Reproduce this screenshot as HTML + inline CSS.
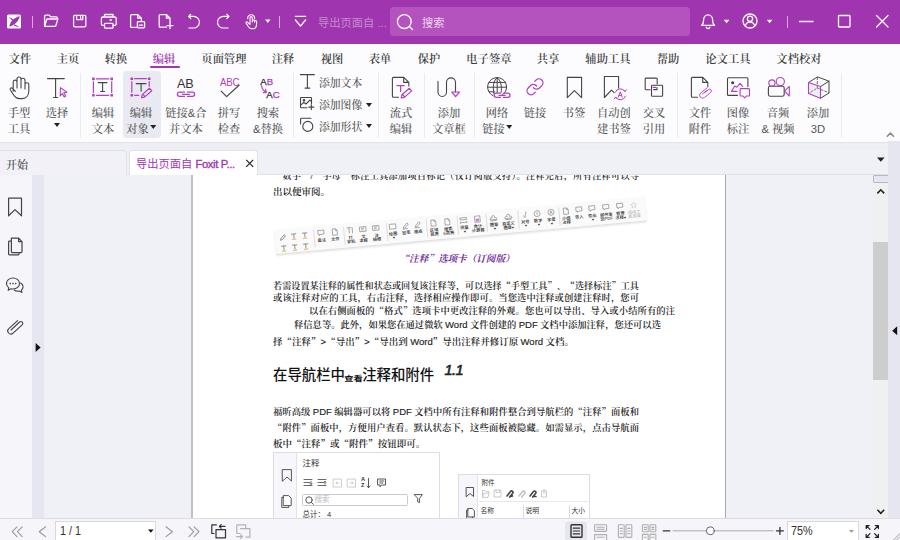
<!DOCTYPE html>
<html lang="zh-CN">
<head>
<meta charset="utf-8">
<title>Foxit PDF Editor</title>
<style>
*{box-sizing:border-box;margin:0;padding:0}
html,body{width:900px;height:540px;overflow:hidden;background:#f0f1f6}
body{position:relative;font-family:"Liberation Sans","Noto Sans CJK SC",sans-serif;color:#444}
.abs{position:absolute}
svg{position:absolute;overflow:visible}
/* title bar */
#title{position:absolute;left:0;top:0;width:900px;height:44px;background:#a035b0}
#title svg{fill:none;stroke:#fff;stroke-width:1.3;stroke-linecap:round;stroke-linejoin:round}
#search{position:absolute;left:390px;top:7px;width:300px;height:29px;border-radius:3.500px;background:#b453bd}
.tsep{position:absolute;top:16px;width:1px;height:12px;background:#d9a6df}
#doctitle{position:absolute;left:318px;top:14.600px;font-size:11.250px;line-height:17px;color:#c08fca;white-space:nowrap}
#stext{position:absolute;left:422px;top:15px;font-size:11.250px;line-height:17px;color:#ecd3ef;white-space:nowrap}
/* menu */
#menu{position:absolute;left:0;top:44px;width:900px;height:26px;background:#fcfcfe}
.mi{position:absolute;top:6.5px;height:16px;line-height:16px;font-size:11.25px;font-family:"Liberation Sans","Noto Serif CJK SC",serif;font-weight:600;color:#3d3d3d;white-space:nowrap;transform:translateX(-50%);letter-spacing:0.1px}
.mi.act{color:#a035b0}
#uline{position:absolute;left:149.500px;top:21.700px;width:30px;height:2.300px;border-radius:1.200px;background:#a035b0}
/* ribbon */
#ribbon{position:absolute;left:0;top:70px;width:900px;height:71px;background:#fcfcfe}
.rsep{position:absolute;top:3px;width:1px;height:65px;background:#eaeaf1}
.rb{position:absolute;top:0;width:0;height:70px}
.rb .l1,.rb .l2{position:absolute;left:0;transform:translateX(-50%);white-space:nowrap;font-family:"Liberation Sans","Noto Serif CJK SC",serif;font-size:11.25px;line-height:16px;color:#555;font-weight:500}
.rb .l1{top:35px}
.rb .l2{top:51.3px}
.rb svg{left:-12px;top:6px;width:24px;height:24px;fill:none;stroke:#444;stroke-width:1.1;stroke-linecap:round;stroke-linejoin:round}
.pu{stroke:#b040c0 !important}
.dd{display:inline-block;width:0;height:0;border-left:3px solid transparent;border-right:3px solid transparent;border-top:4px solid #222;vertical-align:middle;margin-left:1px;position:relative;top:-3px}
#hl{position:absolute;left:122.500px;top:0.500px;width:38px;height:67.300px;border-radius:4px;background:#e9e9f2}
.sm{position:absolute;left:319px;white-space:nowrap;font-family:"Liberation Sans","Noto Serif CJK SC",serif;font-size:10.800px;line-height:16px;color:#555;font-weight:500}
#ribbon>svg{fill:none;stroke:#444;stroke-width:1.1;stroke-linecap:round;stroke-linejoin:round}
.ict{position:absolute;font-family:"Liberation Sans",sans-serif;line-height:1.15;white-space:nowrap}
/* tab bar */
#gap{position:absolute;left:0;top:141px;width:900px;height:10px;background:linear-gradient(to bottom,#fcfcfe 0,#fcfcfe 0.700px,#e3e3ed 0.700px,#e3e3ed 2px,#eeeef5 2px)}
#tabs{position:absolute;left:0;top:148px;width:900px;height:27px;border-bottom:1px solid #e0e0ea}
#tab1{position:absolute;left:0;top:2px;width:127px;height:25px;border:1px solid #e0e0e8;border-bottom:none;border-left:none;border-radius:0 4px 0 0;background:#f1f1f7}
#tab1 span{position:absolute;left:6px;top:6.300px;font-size:11px;line-height:16px;color:#444;font-family:"Liberation Sans","Noto Serif CJK SC",serif;font-weight:500}
#tab2{position:absolute;left:129px;top:2px;width:129px;height:26px;border:1px solid #e0e0e8;border-bottom:none;border-radius:4px 4px 0 0;background:#fff}
#tab2 span b{font-weight:400;-webkit-text-stroke:0.350px #a035b0;letter-spacing:-0.350px}
#tab2 span{position:absolute;left:6px;top:5.300px;font-size:11.250px;font-weight:400;line-height:17px;color:#a035b0;white-space:nowrap}
/* left nav */
#nav{position:absolute;left:0;top:175px;width:32px;height:343px;background:#f5f5fa;z-index:2}
#nav svg{fill:none;stroke:#444;stroke-width:1.2;stroke-linecap:round;stroke-linejoin:round}
#strip{position:absolute;left:32px;top:175px;width:12px;height:343px;background:#e6e6f1}
#panel{position:absolute;left:44px;top:175px;width:148px;height:343px;background:#f0f1f6}
#pageedge{position:absolute;left:191px;top:175px;width:2px;height:343px;background:#c2c1c0}
#page{position:absolute;left:193px;top:175px;width:532px;height:343px;background:#fff;overflow:hidden;font-family:"Liberation Sans","Noto Serif CJK SC",serif;color:#222}
#pageedge2{position:absolute;left:725px;top:175px;width:1px;height:343px;background:#a8a8a8}
#vs{position:absolute;left:873px;top:175px;width:15px;height:343px;background:#f0f0f0}
#thumb{position:absolute;left:873px;top:242px;width:15px;height:138px;background:#cdcdcd}
#rstrip{position:absolute;left:888px;top:141px;width:12px;height:377px;background:#e6e6f1}
/* status */
#status{position:absolute;left:0;top:518px;width:900px;height:22px;background:#f5f5fa;border-top:1px solid #dcdce4}
#status svg{fill:none;stroke:#888;stroke-width:1.1;stroke-linecap:round;stroke-linejoin:round}
.ln{position:absolute;white-space:nowrap;font-size:9.5px;line-height:13px;color:#222;font-weight:600}
.ln b{font-family:"Liberation Sans","Noto Sans CJK SC",sans-serif;font-weight:400;font-size:9.500px;-webkit-text-stroke:0.150px #222}

q{quotes:none;font-family:"Noto Serif CJK SC","Liberation Serif",serif}
q:before,q:after{content:none}
#pc{position:absolute;left:-193px;top:-175px;width:900px;height:540px}
.ln{font-family:"Liberation Serif","Noto Serif CJK SC",serif}
.ln.j{text-align:justify;text-align-last:justify;font-size:9.300px}
#cap{position:absolute;left:399.500px;top:251.300px;white-space:nowrap;font-family:"Liberation Serif","Noto Serif CJK SC",serif;font-weight:700;font-style:italic;font-size:9.600px;line-height:14px;color:#7030a0}
#h1{position:absolute;left:273px;top:364.500px;white-space:nowrap;font-family:"Liberation Sans","Noto Sans CJK SC",sans-serif;font-weight:500;font-size:14.400px;line-height:21px;color:#111}
#h1 small{font-size:8.600px;font-weight:700;display:inline-block;transform:scale(1.080,0.850);transform-origin:50% 80%}
#h1n{position:absolute;left:444.500px;top:360.500px;font-family:"Liberation Sans",sans-serif;font-weight:400;-webkit-text-stroke:0.600px #222;font-style:italic;font-size:14.500px;letter-spacing:-0.500px;line-height:18px;color:#222}
#tstrip{position:absolute;left:273.500px;top:230px;width:371.500px;height:25px;background:#fafafa;border-bottom:1px solid #e0e0e0;box-shadow:0 1px 2px rgba(0,0,0,0.100);transform-origin:0 0;transform:rotate(-5.150deg)}
#tstrip .sp{position:absolute;top:3px;width:0.700px;height:18px;background:#ddd}
#tstrip .si{position:absolute;top:4px;width:0;height:20px}
#tstrip .si svg{left:-3.500px;top:0;width:7px;height:7px;fill:none;stroke:#8a8a8a;stroke-width:0.700}
#tstrip .si span{position:absolute;left:0;transform:translateX(-50%);white-space:nowrap;font-family:"Liberation Sans","Noto Sans CJK SC",sans-serif;font-size:4.200px;line-height:4.400px;color:#222;font-weight:500}
#tstrip .si span:nth-of-type(1){top:8.500px}
#tstrip .si span:nth-of-type(2){top:13.100px}
#tstrip .g1{width:6.500px;height:6.500px;fill:none;stroke:#888;stroke-width:0.700}
#p1{position:absolute;left:273px;top:452px;width:167px;height:70px;background:#fff;border:1px solid #dcdcea}
#p2{position:absolute;left:458px;top:474px;width:132px;height:50px;background:#fff;border:1px solid #dcdcea}
#p1 svg,#p2 svg{fill:none;stroke:#444;stroke-width:0.900;stroke-linejoin:round;stroke-linecap:round}
.pl{position:absolute;left:0;top:0;width:23px;height:100%;background:#f6f6fb;border-right:1px solid #e2e2ee}
.pt{position:absolute;white-space:nowrap;font-family:"Liberation Sans","Noto Sans CJK SC",sans-serif;color:#333;line-height:1.200}
.sb{position:absolute;left:28px;top:40.500px;width:106px;height:12px;border:1px solid #c9c9d6;border-radius:1.500px;background:#fff}
.hr{position:absolute;left:20px;top:25.800px;width:110px;height:1px;background:#e8e8f0}
.vr{position:absolute;top:30px;width:1px;height:20px;background:#dcdce6}

#pgbox{position:absolute;left:55px;top:2px;width:101px;height:22px;background:#fff;border:1px solid #d8d8e4}
#pgbox span{position:absolute;left:3.500px;top:2px;font-size:12px;transform:scaleX(0.900);transform-origin:0 50%;line-height:14px;color:#333;font-family:"Liberation Sans",sans-serif;white-space:nowrap}
#zbox{position:absolute;left:787px;top:2px;width:72px;height:22px;background:#fff;border:1px solid #d8d8e4}
#zbox span{position:absolute;left:3px;top:2px;font-size:12px;transform:scaleX(0.900);transform-origin:0 50%;line-height:14px;color:#333;font-family:"Liberation Sans",sans-serif;white-space:nowrap}
</style>
</head>
<body>

<!-- ================= TITLE BAR ================= -->
<div id="title">
  <div class="tsep" style="left:32px"></div>
  <div class="tsep" style="left:279px"></div>
  <div class="tsep" style="left:787px"></div>
  <div id="doctitle">导出页面自 ...</div>
  <div id="search"></div>
  <div id="stext">搜索</div>
  <svg style="left:0;top:0" width="900" height="44" viewBox="0 0 900 44">
    <!-- logo -->
    <rect x="7" y="14.5" width="14" height="14" rx="1.5" fill="#fff" stroke="none"/>
    <path d="M9.3 26.8 C9.8 21.5 14 17.5 19.8 16.2 C18.8 20.8 15 25 9.3 26.8 Z" fill="#a035b0" stroke="none"/>
    <path d="M8.6 17.2 C10.5 17.4 12.2 18.2 13.4 19.4 L12.2 20.6 C11.3 19.2 10.1 18.1 8.6 17.2 Z M14.6 24.6 C16 25 17.6 25.8 19.6 27.2 C17.6 26.9 15.6 26.4 13.6 25.6 Z" fill="#a035b0" stroke="none"/>
    <!-- open folder -->
    <path d="M44.6 26.4 V16.2 a1 1 0 0 1 1-1 h3.6 l1.5 1.6 h5.6 a1 1 0 0 1 1 1 V19 M44.6 26.4 l2.3-7.4 h11 l-2.3 7.4 z"/>
    <!-- save -->
    <rect x="73.6" y="15.4" width="12.2" height="11.4" rx="1"/>
    <path d="M76.6 15.6 v4 h6.2 v-4 M80.6 16.6 v1.8"/>
    <!-- print -->
    <path d="M104.5 17 v-2.5 h8.5 v2.5 M104.5 25.3 h-1.7 a1.4 1.4 0 0 1 -1.4-1.4 v-5.5 a1.4 1.4 0 0 1 1.4-1.4 h12 a1.4 1.4 0 0 1 1.4 1.4 v5.5 a1.4 1.4 0 0 1 -1.4 1.4 h-1.7"/>
    <rect x="104.5" y="23.3" width="8.5" height="4.8" rx="0.6"/>
    <path d="M110 20 h1.4"/>
    <!-- create pdf -->
    <path d="M136.5 27.4 h-5 a0.9 0.9 0 0 1 -0.9-0.9 v-11 a0.9 0.9 0 0 1 0.9-0.9 h6.4 l3.5 3.6 v2.6 M137.7 14.8 v3.4 h3.5"/>
    <rect x="137.4" y="21.6" width="7.2" height="6.2" rx="0.8"/>
    <path d="M139.4 25.2 h3.2"/>
    <!-- new doc -->
    <path d="M166.5 27.2 h-6.4 a0.9 0.9 0 0 1 -0.9-0.9 v-10.8 a0.9 0.9 0 0 1 0.9-0.9 h6.5 l3.4 3.6 v4 M166.4 14.8 v3.4 h3.5 M170 22.6 v6 M167 25.6 h6"/>
    <!-- undo -->
    <path d="M190.700 14.300 l-2.200 2.100 l2.200 2.100 M188.700 16.400 h4.900 a5.800 5.800 0 0 1 0 11.600 h-4.800" stroke-width="1.200"/>
    <!-- redo -->
    <path d="M226.800 14.300 l2.200 2.100 l-2.200 2.100 M228.800 16.400 h-5.500 a5.800 5.800 0 0 0 0 11.600 h4.800" stroke-width="1.200"/>
    <!-- hand pointer -->
    <g stroke-width="1.100"><path d="M250 24.400 v-6.600 a1.150 1.150 0 0 1 2.300 0 v4.200 m0 -1.300 a1.150 1.150 0 0 1 2.200 0.200 v1.300 m0 -0.900 a1.100 1.100 0 0 1 2.100 0.300 v1.700 c0 3.300 -1 5.500 -3.300 5.500 h-1.700 c-1.500 0 -2.300 -0.700 -3.300 -2.300 l-2.200 -3.400 c-0.500 -0.900 0.600 -1.700 1.400 -0.900 l1.400 1.500"/>
    <path d="M247.700 18.800 a3.500 3.500 0 1 1 6.900 0"/></g>
    <path d="M265 19.6 h5.6 l-2.8 3.4 z" fill="#fff" stroke="none"/>
    <!-- customize -->
    <path d="M295.4 16.4 h10.2 M295.4 20 l5.1 6 l5.1 -6"/>
    <!-- search magnifier -->
    <circle cx="404.300" cy="21.600" r="6.900"/>
    <path d="M409.300 26.500 l3.300 3"/>
    <!-- bell -->
    <path d="M701.6 25.4 h13 c-1.6-1.3 -2-2.6 -2-5.4 c0-2.8 -1.8-5.2 -4.5-5.2 c-2.700 0 -4.500 2.400 -4.500 5.200 c0 2.800 -0.400 4.100 -2 5.400 z M706.300 27.200 a1.900 1.900 0 0 0 3.600 0"/>
    <path d="M723.800 19.800 h5.600 l-2.800 3.400 z" fill="#fff" stroke="none"/>
    <!-- user -->
    <circle cx="750" cy="21" r="7"/>
    <circle cx="750" cy="18.800" r="2.600"/>
    <path d="M745.300 26 c0.600-2.600 2.400-3.800 4.700-3.800 c2.300 0 4.100 1.200 4.700 3.800"/>
    <path d="M766.800 19.800 h5.600 l-2.800 3.400 z" fill="#fff" stroke="none"/>
    <!-- window buttons -->
    <path d="M799.500 21.500 h13.500"/>
    <rect x="838.500" y="15.500" width="11.500" height="11.500" rx="0.800"/>
    <path d="M876.500 15.500 l11.500 11.500 M888 15.500 l-11.500 11.500"/>
  </svg>
</div>

<!-- ================= MENU ================= -->
<div id="menu">
  <div class="mi" style="left:20px">文件</div>
  <div class="mi" style="left:68px">主页</div>
  <div class="mi" style="left:116px">转换</div>
  <div class="mi act" style="left:164px">编辑</div>
  <div class="mi" style="left:224px">页面管理</div>
  <div class="mi" style="left:283px">注释</div>
  <div class="mi" style="left:332px">视图</div>
  <div class="mi" style="left:380px">表单</div>
  <div class="mi" style="left:429px">保护</div>
  <div class="mi" style="left:489px">电子签章</div>
  <div class="mi" style="left:548px">共享</div>
  <div class="mi" style="left:608px">辅助工具</div>
  <div class="mi" style="left:668px">帮助</div>
  <div class="mi" style="left:728px">论文工具</div>
  <div class="mi" style="left:799px">文档校对</div>
  <div id="uline"></div>
</div>

<!-- ================= RIBBON ================= -->
<div id="ribbon">
  <div id="hl"></div>
  <div class="rsep" style="left:80px"></div>
  <div class="rsep" style="left:292.500px"></div>
  <div class="rsep" style="left:377.500px"></div>
  <div class="rsep" style="left:424px"></div>
  <div class="rsep" style="left:474px"></div>
  <div class="rsep" style="left:677px"></div>
  <div class="rsep" style="left:841px"></div>


  <svg id="ricons" style="left:0;top:-70px" width="900" height="141" viewBox="0 0 900 141">
    <!-- hand tool -->
    <path d="M13.200 91.200 V82 a1.900 1.900 0 0 1 3.800 0 V88 M17 88 V79 a2 2 0 0 1 4 0 V88 M21 88 V80.200 a2 2 0 0 1 4 0 V88.500 M25 89 V84.600 a1.900 1.900 0 0 1 3.800 0 V91 c0 4.500 -2.600 7.600 -6.400 7.600 h-3 c-2.600 0 -4.200 -1.200 -5.600 -3.400 l-3.400 -5.200 c-0.900 -1.500 0.700 -2.900 2.100 -1.600 l2.900 3"/>
    <!-- select T -->
    <path d="M47.500 78.600 h16.800 M55.600 78.600 v18.900 M53.500 97.500 h4.200"/>
    <path class="pu" d="M60.400 87.600 l6.600 4.600 l-3.200 0.700 l1.900 3.200 l-1.500 0.900 l-1.900 -3.300 l-2.100 2.300 z"/>
    <!-- edit text -->
    <g class="pu" stroke-width="1.200">
      <path d="M96.300 78.900 h12.500 M96.300 95.300 h12.500 M93.400 81.800 v10.600 M111.700 81.800 v10.600"/>
      <g fill="#b040c0" stroke="none"><rect x="92.100" y="77.600" width="2.600" height="2.600" rx="0.500"/><rect x="110.400" y="77.600" width="2.600" height="2.600" rx="0.500"/><rect x="92.100" y="94" width="2.600" height="2.600" rx="0.500"/><rect x="110.400" y="94" width="2.600" height="2.600" rx="0.500"/></g>
    </g>
    <path d="M98.200 82.600 h8.800 M102.600 82.600 v8.900 M100.600 91.500 h4"/>
    <!-- edit object -->
    <g class="pu" stroke-width="1.200">
      <path d="M134.600 78.700 h11.800 M131.800 81.600 v10.600 M149.200 81.600 v4.600 M134.600 95.300 h4.200"/>
      <g fill="#b040c0" stroke="none"><rect x="130.500" y="77.400" width="2.600" height="2.600" rx="0.500"/><rect x="147.900" y="77.400" width="2.600" height="2.600" rx="0.500"/><rect x="130.500" y="94" width="2.600" height="2.600" rx="0.500"/></g>
      <path d="M141.600 97.600 l0.600 -3 l7.200 -6.400 l2.300 2.500 l-7.200 6.400 z M142.800 94.200 l2.200 2.400"/>
    </g>
    <path d="M136.200 83.600 h9.800 M141.100 83.600 v7.600"/>
    <!-- link & merge -->
    <g class="pu" stroke-width="1.300">
      <path d="M184.500 92.200 h-5 a2.100 2.100 0 0 0 0 4.200 h5 M187.500 92.200 h5 a2.100 2.100 0 0 1 0 4.200 h-5 M182.500 94.300 h7"/>
    </g>
    <!-- spell check -->
    <path d="M221.200 91.200 l5.400 5.400 l12.400 -11.400" stroke-width="1.200"/>
    <!-- search & replace arrow -->
    <path class="pu" d="M261.600 85.800 c0.300 3 1.600 5 4.600 6.400 M263.400 92.600 l3 -0.300 l-0.800 -2.900" stroke-width="1.200"/>
    <!-- add text T -->
    <path d="M300.400 74.600 h14 M307.400 74.600 v13.500 M305 88.100 h4.800"/>
    <!-- add image -->
    <path d="M311.500 103.500 v-5.200 a0.800 0.800 0 0 0 -0.800-0.800 h-9.400 a0.800 0.800 0 0 0 -0.800 0.800 v8.600 a0.800 0.800 0 0 0 0.800 0.800 h5.700 M300.700 105.200 l3-2.800 l2.200 1.600 l4-3.800 l1.600 1.400 M311.300 104.600 v5 M308.800 107.100 h5"/>
    <circle cx="304" cy="100.300" r="0.800" fill="#444"/>
    <!-- add shape -->
    <path d="M300.600 124 v-5 a0.800 0.800 0 0 1 0.800-0.800 h9.600"/>
    <circle cx="307.800" cy="126.400" r="5"/>
    <!-- flow edit -->
    <path d="M398.500 97.200 h-5.100 a1 1 0 0 1 -1-1 v-17.800 a1 1 0 0 1 1-1 h10.400 l5 5 v3.600 M403.700 77.600 v4.800 h4.900"/>
    <g class="pu" stroke-width="1.200"><path d="M397 85.600 h7.200 M400.600 85.600 v5.800 M401.200 98 l0.700 -3.200 l7.400 -6.500 l2.400 2.600 l-7.400 6.500 z M402.600 94.600 l2.200 2.400"/></g>
    <!-- article box -->
    <path d="M438 81.400 v10.800 a4.250 4.250 0 0 0 8.500 0 v-9.800 a4.500 4.500 0 0 1 9 0 v9.600"/>
    <path class="pu" d="M451.800 92 h7.600 l-3.800 4.600 z" stroke-width="1.200"/>
    <!-- web link globe -->
    <path d="M501.400 95.600 a9.500 9.500 0 1 0 -8.600 0 M497.200 77.700 v15 M487.800 87.200 h18.800 M489.200 82.400 h16 M489.200 91.800 h5.500 M497.200 77.700 c-3.800 2.600 -4.800 9.400 -3.200 16 M497.200 77.700 c3.800 2.600 4.800 9.400 4 14.400" stroke-width="1"/>
    <g class="pu" stroke-width="1.300">
      <path d="M500.700 93.200 h-4.400 a2.100 2.100 0 0 0 0 4.200 h4.400 M503.500 93.200 h4.400 a2.100 2.100 0 0 1 0 4.200 h-4.400 M499 95.300 h6.200"/>
    </g>
    <!-- link -->
    <g class="pu" stroke-width="1.600" transform="translate(525.400 77.200) scale(0.800)">
      <path d="M10 13a5 5 0 0 0 7.540.540l3-3a5 5 0 0 0-7.070-7.070l-1.720 1.710"/>
      <path d="M14 11a5 5 0 0 0-7.540-.540l-3 3a5 5 0 0 0 7.070 7.070l1.710-1.710"/>
    </g>
    <!-- bookmark -->
    <path d="M567.300 77.400 h14.300 v20.200 l-7.200 -7 l-7.100 7 z"/>
    <!-- auto bookmark -->
    <path d="M618.600 88 v-11.500 h-14.200 v21 l7.100 -7.400 l2.600 2.600"/>
    <g class="pu" stroke-width="1">
      <path d="M615.300 92.200 a5.400 5.400 0 0 1 9.600 -0.800 M625.300 96.400 a5.400 5.400 0 0 1 -9.600 0.800"/>
      <path d="M623.600 90 l1.500 1.600 l1.200 -1.900 M617 98.600 l-1.500 -1.600 l-1.200 1.900"/>
      <path d="M618.400 97 l1.900 -5.200 l1.900 5.200 M619.100 95.300 h2.400"/>
    </g>
    <!-- cross reference -->
    <path d="M650 89.700 h-4 a0.800 0.800 0 0 1 -0.800-0.800 v-10 a0.800 0.800 0 0 1 0.800-0.800 h10.400 a0.800 0.800 0 0 1 0.800 0.800 v5"/>
    <rect x="651.500" y="85.300" width="11.100" height="10.900" rx="0.800"/>
    <path d="M653.600 89.600 h3.400 v-2"/>
    <path class="pu" d="M653.200 87.400 h2.400" stroke-width="1.400"/>
    <!-- file attachment -->
    <path d="M697.500 97.200 h-5.100 a1 1 0 0 1 -1-1 v-17.800 a1 1 0 0 1 1-1 h10.400 l5 5 v4.600 M702.700 77.600 v4.800 h4.900"/>
    <g class="pu" stroke-width="0.900">
      <path d="M704.500 92.800 l4 -3.200 a1.800 1.800 0 0 1 2.300 2.800 l-6.400 5.100 a2.900 2.900 0 0 1 -3.700 -4.500 l6 -4.800 M702.400 94 l4.600 -3.700"/>
    </g>
    <!-- image annotation -->
    <path d="M737.500 95.400 h-9 a1 1 0 0 1 -1-1 v-15.600 a1 1 0 0 1 1-1 h18.400 a1 1 0 0 1 1 1 v7.600"/>
    <circle cx="732.700" cy="82.700" r="1" fill="#444"/>
    <g class="pu" stroke-width="1.100">
      <path d="M737 91.400 h-5.600 l3.400 -5.400 l2 1.200 l3.300 -3.800 l2.500 3"/>
      <path d="M740.800 88.600 h8 a0.700 0.700 0 0 1 0.700 0.700 v6 a0.700 0.700 0 0 1 -0.700 0.700 h-2.600 l-1.600 1.900 l-1.600 -1.900 h-2.200 a0.700 0.700 0 0 1 -0.700 -0.700 v-6 a0.700 0.700 0 0 1 0.700 -0.700 z"/>
    </g>
    <!-- audio video -->
    <rect x="768.400" y="86.300" width="15.800" height="9.900" rx="1.600"/>
    <g class="pu" stroke-width="1.100">
      <circle cx="771.900" cy="83" r="3.100"/><circle cx="780.300" cy="81.600" r="4.100"/>
      <path d="M784.600 91.200 l4.700 -4.800 v9.600 z"/>
    </g>
    <!-- 3D cube -->
    <path d="M808.500 82.500 L817.500 76.900 L829 81.200 L829 93 L820.500 98.300 M829 81.200 L820.500 86.600" stroke-width="1"/>
    <path d="M817.300 77.500 V88 L808.800 93.400 M817.300 88 L828.700 92.800" stroke-width="0.800" stroke-dasharray="2.200 1.800"/>
    <path class="pu" d="M808.500 82.500 L820.500 86.600 V98.300 L808.500 93.600 Z" fill="rgba(200,190,225,0.250)" stroke-width="1.100"/>
    <!-- collapse chevron -->
    <path d="M887.300 136.200 l3.100 -3.100 l3.100 3.100" stroke="#888" stroke-width="1.500"/>
  </svg>
  <div class="ict" style="left:177.200px;top:6px;font-size:13.600px;color:#333;letter-spacing:-0.300px;transform:scaleX(0.930);transform-origin:0 0">AB</div>
  <div class="ict" style="left:220px;top:6.200px;font-size:11.500px;color:#b040c0;letter-spacing:-0.300px;transform:scaleX(0.840);transform-origin:0 0">ABC</div>
  <div class="ict" style="left:260.300px;top:5.600px;font-size:9.600px;color:#222;-webkit-text-stroke:0.250px">A<span style="color:#b040c0">B</span></div>
  <div class="ict" style="left:266.300px;top:19.300px;font-size:9.600px;color:#222;-webkit-text-stroke:0.250px">A<span style="color:#b040c0">C</span></div>
  <div class="rb" style="left:19px"><div class="l1">手型</div><div class="l2">工具</div></div>
  <div class="rb" style="left:57px"><div class="l1">选择</div><div class="l2" style="top:49px"><span class="dd" style="margin-left:0"></span></div></div>
  <div class="rb" style="left:103px"><div class="l1">编辑</div><div class="l2">文本</div></div>
  <div class="rb" style="left:141px"><div class="l1">编辑</div><div class="l2">对象<span class="dd"></span></div></div>
  <div class="rb" style="left:186px"><div class="l1">链接&amp;合</div><div class="l2">并文本</div></div>
  <div class="rb" style="left:229px"><div class="l1">拼写</div><div class="l2">检查</div></div>
  <div class="rb" style="left:268px"><div class="l1">搜索</div><div class="l2">&amp;替换</div></div>

  <div class="sm" style="top:5px">添加文本</div>
  <div class="sm" style="top:27px">添加图像 <span class="dd" style="top:-1.500px"></span></div>
  <div class="sm" style="top:48.8px">添加形状 <span class="dd" style="top:-1.500px"></span></div>

  <div class="rb" style="left:401px"><div class="l1">流式</div><div class="l2">编辑</div></div>
  <div class="rb" style="left:449px"><div class="l1">添加</div><div class="l2">文章框</div></div>
  <div class="rb" style="left:497px"><div class="l1">网络</div><div class="l2">链接<span class="dd"></span></div></div>
  <div class="rb" style="left:535px"><div class="l1">链接</div></div>
  <div class="rb" style="left:574px"><div class="l1">书签</div></div>
  <div class="rb" style="left:614px"><div class="l1">自动创</div><div class="l2">建书签</div></div>
  <div class="rb" style="left:654px"><div class="l1">交叉</div><div class="l2">引用</div></div>
  <div class="rb" style="left:700px"><div class="l1">文件</div><div class="l2">附件</div></div>
  <div class="rb" style="left:738px"><div class="l1">图像</div><div class="l2">标注</div></div>
  <div class="rb" style="left:778px"><div class="l1">音频</div><div class="l2">&amp; 视频</div></div>
  <div class="rb" style="left:818px"><div class="l1">添加</div><div class="l2" style="font-family:'Liberation Sans',sans-serif">3D</div></div>
</div>

<!-- ================= TABS ================= -->
<div id="gap"></div>
<div style="position:absolute;left:0;top:150px;width:888px;height:25px;background:#f0f1f6"></div>
<div id="tabs">
  <div id="tab1"><span>开始</span></div>
  <div id="tab2"><span>导出页面自 <b>Foxit P...</b></span></div>
  <svg style="left:0;top:-148px;fill:none;stroke:#222;stroke-width:1.200" width="900" height="180" viewBox="0 0 900 180">
    <path d="M246.200 159.800 l7 7 M253.200 159.800 l-7 7"/>
    <path d="M877 157.500 h7.600 l-3.800 4.300 z" fill="#222" stroke="none"/>
  </svg>
</div>

<!-- ================= MAIN ================= -->
<div id="nav">
  <svg style="left:0;top:-175px" width="44" height="540" viewBox="0 0 44 540">
    <path d="M8.600 198.200 h12.900 v17.600 l-6.500 -6.200 l-6.400 6.200 z"/>
    <path d="M11.400 238.200 h7.200 l3.400 3.400 v10.200 a0.800 0.800 0 0 1 -0.800 0.800 h-9 a0.800 0.800 0 0 1 -0.800 -0.800 z M18.600 238.400 v3.200 h3.200 M11.200 241.200 h-1.800 a0.800 0.800 0 0 0 -0.800 0.800 v12 a0.800 0.800 0 0 0 0.800 0.800 h8.800 a0.800 0.800 0 0 0 0.800 -0.800 v-1.400"/>
    <path d="M13 278 c3.700 0 6.500 2.400 6.500 5.500 c0 3.100 -2.800 5.500 -6.500 5.500 c-0.700 0 -1.400 -0.100 -2 -0.200 l-2.800 1.500 l0.500 -2.700 c-1.400 -1 -2.200 -2.500 -2.200 -4.100 c0 -3.100 2.800 -5.500 6.500 -5.500 z" stroke-width="1.100"/>
    <path d="M20.600 283 c1.500 0.800 2.500 2.200 2.500 3.800 c0 1.300 -0.600 2.400 -1.600 3.200 l0.400 2.400 l-2.400 -1.300 c-1.800 0.400 -3.800 0 -5.200 -1.100" stroke-width="1.100"/>
    <g fill="#444" stroke="none"><circle cx="10.300" cy="283.600" r="0.800"/><circle cx="13" cy="283.600" r="0.800"/><circle cx="15.700" cy="283.600" r="0.800"/></g>
    <path d="M13.400 327.600 l6.200 -5.600 a1.900 1.900 0 0 1 2.600 2.800 l-9.200 8.400 a3.100 3.100 0 0 1 -4.200 -4.600 l8.800 -8 M11 330 l7.200 -6.600" stroke-width="1.100"/>
    <path d="M35.600 343 l5 4.500 l-5 4.500 z" fill="#111" stroke="none"/>
  </svg>
</div>
<div id="strip"></div>
<div id="panel"></div>
<div id="pageedge"></div>
<div id="page">
<div id="pc">
  <div class="ln j" style="left:273px;top:169.300px;width:366px;font-size:9px"><q>“</q>数字<q>”</q>/<q>“</q>字母<q>”</q>标注工具添加项目标记（仅订阅版支持）。注释完后，所有注释可以导</div>
  <div class="ln" style="left:273px;top:185.500px">出以便审阅。</div>
  <div id="tstrip"><i class="sp" style="left:39.0px"></i><i class="sp" style="left:69.3px"></i><i class="sp" style="left:111.5px"></i><i class="sp" style="left:151.6px"></i><i class="sp" style="left:182.8px"></i><i class="sp" style="left:211.9px"></i><i class="sp" style="left:244.0px"></i><i class="sp" style="left:285.2px"></i><div class="si" style="left:46.7px"><svg viewBox="0 0 7 7"><path d="M0.500 0.500 h6 v4 h-3.500 l-1.200 1.300 v-1.300 h-1.300 z"/></svg><span>备注</span><span></span></div><div class="si" style="left:60.3px"><svg viewBox="0 0 7 7"><path d="M1 0.300 h3.200 l1.600 1.600 v4.600 h-4.800 z M4.200 0.300 v1.600 h1.600"/></svg><span>文件</span><span></span></div><div class="si" style="left:75.8px"><svg viewBox="0 0 7 7"><path d="M0.500 0.500 h4.500 M2.800 0.500 v5.500 M6 0.300 v6"/></svg><span>打</span><span>字机</span></div><div class="si" style="left:88.4px"><svg viewBox="0 0 7 7"><rect x="0.300" y="0.800" width="6.400" height="4.600"/><path d="M1.800 2.200 h3.400 M1.800 3.800 h2.400"/></svg><span>文</span><span>本框</span></div><div class="si" style="left:101.9px"><svg viewBox="0 0 7 7"><rect x="0.300" y="0.800" width="6.400" height="4.600"/><path d="M1.800 2.200 h3.400 M1.800 3.800 h2.400"/></svg><span>注</span><span>释框</span></div><div class="si" style="left:118.2px"><svg viewBox="0 0 7 7"><rect x="0.300" y="0.800" width="6.400" height="4.800"/></svg><span>绘图</span><span>▾</span></div><div class="si" style="left:131.6px"><svg viewBox="0 0 7 7"><path d="M1 6 l0.400 -1.600 l3.600 -3.600 l1.300 1.300 l-3.600 3.600 z M0.500 6.600 h5" class="sv"/></svg><span>铅笔</span><span></span></div><div class="si" style="left:143.6px"><svg viewBox="0 0 7 7"><path d="M1 6 l0.400 -1.600 l3.600 -3.600 l1.300 1.300 l-3.600 3.600 z M0.500 6.600 h5" class="sv"/></svg><span>橡皮</span><span></span></div><div class="si" style="left:159.5px"><svg viewBox="0 0 7 7"><path d="M1 0.300 h3.200 l1.600 1.600 v4.600 h-4.800 z M4.200 0.300 v1.600 h1.600"/></svg><span>区域</span><span>高亮</span></div><div class="si" style="left:173.7px"><svg viewBox="0 0 7 7"><path d="M1 0.300 h3.200 l1.600 1.600 v4.600 h-4.800 z M4.200 0.300 v1.600 h1.600"/></svg><span>搜索</span><span>&amp;高亮</span></div><div class="si" style="left:189.8px"><svg viewBox="0 0 7 7"><rect x="0.300" y="0.800" width="6.400" height="2"/><path d="M0.300 5.500 h6.400 M0.300 4.500 v2 M6.700 4.500 v2"/></svg><span>测量</span><span>▾</span></div><div class="si" style="left:203.4px"><svg viewBox="0 0 7 7"><rect x="0.800" y="0.300" width="5.400" height="6.200" class="sv"/><rect x="1.800" y="3" width="3.400" height="2.600" fill="#b48ac8" stroke="none"/></svg><span>合计</span><span>计算器</span></div><div class="si" style="left:219.7px"><svg viewBox="0 0 7 7"><path d="M2.400 3.400 c-1.400 -2.800 3.600 -2.800 2.200 0 c2.400 0 2.400 0.600 2.400 2 h-7 c0 -1.400 0 -2 2.400 -2 z M0.400 6.500 h6.200"/></svg><span>图章</span><span>▾</span></div><div class="si" style="left:234.0px"><svg viewBox="0 0 7 7"><path d="M2.400 3.400 c-1.400 -2.800 3.600 -2.800 2.200 0 c2.400 0 2.400 0.600 2.400 2 h-7 c0 -1.400 0 -2 2.400 -2 z M0.400 6.500 h6.200"/></svg><span>自定义</span><span>图章▾</span></div><div class="si" style="left:251.0px"><svg viewBox="0 0 7 7"><path d="M1.800 4 l1.200 2.200 l1.600 -6"/></svg><span>对号</span><span>▾</span></div><div class="si" style="left:263.9px"><svg viewBox="0 0 7 7"><circle cx="3.500" cy="3.300" r="3"/><path d="M3.500 1.800 v3"/></svg><span>数字</span><span>▾</span></div><div class="si" style="left:277.2px"><svg viewBox="0 0 7 7"><circle cx="3.500" cy="3.300" r="3"/><path d="M2.400 4.800 l1.100 -3 l1.100 3"/></svg><span>字母</span><span>▾</span></div><div class="si" style="left:292.2px"><svg viewBox="0 0 7 7"><path d="M1 0.300 h3.200 l1.600 1.600 v4.600 h-4.800 z M4.200 0.300 v1.600 h1.600"/></svg><span>小结</span><span>注释</span></div><div class="si" style="left:305.3px"><svg viewBox="0 0 7 7"><path d="M0.500 0.500 h6 v4 h-3.500 l-1.200 1.300 v-1.300 h-1.300 z"/></svg><span>导入</span><span></span></div><div class="si" style="left:318.3px"><svg viewBox="0 0 7 7"><path d="M0.500 0.500 h6 v4 h-3.500 l-1.200 1.300 v-1.300 h-1.300 z"/></svg><span>导出</span><span>▾</span></div><div class="si" style="left:332.4px"><svg viewBox="0 0 7 7"><path d="M0.500 0.500 h6 v4 h-3.500 l-1.200 1.300 v-1.300 h-1.300 z"/></svg><span>邮件发</span><span>送PDF</span></div><div class="si" style="left:346.4px"><svg viewBox="0 0 7 7"><path d="M0.500 0.500 h6 v4 h-3.500 l-1.200 1.300 v-1.300 h-1.300 z"/></svg><span>管理</span><span>注释▾</span></div><div class="si" style="left:360.3px"><svg viewBox="0 0 7 7"><path d="M3.500 0.500 l0.900 2 l2.100 0.200 l-1.600 1.400 l0.500 2.100 l-1.900 -1.100 l-1.900 1.100 l0.500 -2.100 l-1.600 -1.400 l2.100 -0.200 z" stroke="#ccc"/></svg><span style="color:#bbb">保持工</span><span style="color:#bbb">具选择</span></div><svg class="g1" style="left:5.3px;top:5.0px" viewBox="0 0 5 5"><path d="M0.500 4.500 l0.400 -1.400 l2.600 -2.600 l1 1 l-2.600 2.600 z"/></svg><svg class="g1" style="left:16.4px;top:5.0px" viewBox="0 0 5 5"><path d="M0.500 0.600 h4 M2.500 0.600 v3.400"/><path d="M0.800 4.600 h3.400" stroke="#e0b060"/></svg><svg class="g1" style="left:27.4px;top:5.0px" viewBox="0 0 5 5"><path d="M0.500 0.600 h4 M2.500 0.600 v3.400"/><path d="M0.800 4.600 h3.400" stroke="#e0b060"/></svg><svg class="g1" style="left:5.3px;top:15.5px" viewBox="0 0 5 5"><path d="M0.500 0.600 h4 M2.500 0.600 v3.400"/><path d="M0.800 4.600 h3.400" stroke="#e0b060"/></svg><svg class="g1" style="left:16.4px;top:15.5px" viewBox="0 0 5 5"><path d="M0.500 0.600 h4 M2.500 0.600 v3.400"/><path d="M0.800 4.600 h3.400" stroke="#e0b060"/></svg><svg class="g1" style="left:27.4px;top:15.5px" viewBox="0 0 5 5"><path d="M0.500 0.600 h4 M2.500 0.600 v3.400"/><path d="M0.800 4.600 h3.400" stroke="#e0b060"/></svg></div>
  <div id="cap"><q>“</q>注释<q>”</q>选项卡（订阅版）</div>
  <div class="ln j" style="left:273px;top:278.500px;width:366px;font-size:9.100px">若需设置某注释的属性和状态或回复该注释等，可以选择<q>“</q>手型工具<q>”</q>、<q>“</q>选择标注<q>”</q>工具</div>
  <div class="ln j" style="left:273px;top:291.500px;width:366px">或该注释对应的工具，右击注释，选择相应操作即可。当您选中注释或创建注释时，您可</div>
  <div class="ln j" style="left:309px;top:303.800px;width:366px">以在右侧面板的<q>“</q>格式<q>”</q>选项卡中更改注释的外观。您也可以导出、导入或小结所有的注</div>
  <div class="ln j" style="left:294px;top:317.500px;width:366px">释信息等。此外，如果您在通过微软 <b>Word</b> 文件创建的 <b>PDF</b> 文档中添加注释，您还可以选</div>
  <div class="ln" style="left:273px;top:334.500px">择<q>“</q>注释<q>”</q><b>&gt;</b><q>“</q>导出<q>”</q><b>&gt;</b><q>“</q>导出到 <b>Word</b><q>”</q>导出注释并修订原 <b>Word</b> 文档。</div>
  <div id="h1">在导航栏中<small>查看</small>注释和附件</div>
  <div id="h1n">1.1</div>
  <div class="ln j" style="left:273px;top:404.500px;width:366px">福昕高级 <b>PDF</b> 编辑器可以将 <b>PDF</b> 文档中所有注释和附件整合到导航栏的<q>“</q>注释<q>”</q>面板和</div>
  <div class="ln j" style="left:273px;top:420.800px;width:366px"><q>“</q>附件<q>”</q>面板中，方便用户查看。默认状态下，这些面板被隐藏。如需显示，点击导航面</div>
  <div class="ln" style="left:273px;top:437px">板中<q>“</q>注释<q>”</q>或<q>“</q>附件<q>”</q>按钮即可。</div>

  <!-- comments panel screenshot -->
  <div id="p1">
    <div class="pl"></div>
    <div class="pt" style="left:28.500px;top:5px;font-size:8.500px">注释</div>
    <svg style="left:8px;top:16px" width="10" height="13" viewBox="0 0 10 13"><path d="M0.600 0.600 h8.800 v11.400 l-4.400 -4 l-4.400 4 z"/></svg>
    <svg style="left:7px;top:41.500px" width="11" height="13" viewBox="0 0 11 13"><path d="M2.600 0.600 h5 l2.600 2.600 v7.400 h-7.600 z M2.600 2.400 h-1.800 v10 h7 v-1.800" fill="#fff"/></svg>
    <svg style="left:30px;top:25px" width="82" height="11" viewBox="0 0 82 11">
      <path d="M0 1.500 h8 M0 4.500 h5.500 M0 7.500 h8 M7 3.300 v3 M6 5.400 l1 1.100 l1 -1.100 M14 1.500 h8 M14 4.500 h5.500 M14 7.500 h8 M21 6.300 v-3 M20 4.400 l1 -1.100 l1 1.100" stroke-width="0.800"/>
      <rect x="29.500" y="1" width="8" height="8" stroke="#c8c8c8"/><path d="M32 5 h3 M33 4 l-1 1 l1 1" stroke="#c8c8c8"/>
      <rect x="43.500" y="1" width="8" height="8" stroke="#c8c8c8"/><path d="M46 5 h3 M48 4 l1 1 l-1 1" stroke="#c8c8c8"/>
      <path d="M74 1 h7.500 v6 h-4 l-1.500 1.800 v-1.800 h-2 z M75.800 3 h4 M75.800 5 h3"/>
    </svg>
    <div class="pt" style="left:87px;top:24px;font-size:5.600px;line-height:5.500px;font-weight:700;color:#333">A<br>Z</div>
    <svg style="left:91.500px;top:25px" width="5" height="11" viewBox="0 0 5 11"><path d="M2.500 0.500 v9 M1 8 l1.500 1.800 l1.500 -1.800"/></svg>
    <div class="sb"></div>
    <svg style="left:30.500px;top:43px" width="9" height="9" viewBox="0 0 9 9"><circle cx="4" cy="4" r="3.200"/><path d="M6.400 6.400 l2 2"/></svg>
    <div class="pt" style="left:40.500px;top:42.300px;font-size:7.500px;color:#bbb">搜索</div>
    <svg style="left:140px;top:41px" width="9" height="10" viewBox="0 0 9 10"><path d="M0.600 0.600 h7.800 l-3 4 v4.200 l-1.800 -1.200 v-3 z"/></svg>
    <div class="pt" style="left:28.500px;top:57px;font-size:7.500px">总计： 4</div>
  </div>

  <!-- attachments panel screenshot -->
  <div id="p2">
    <div class="pl" style="width:19px"></div>
    <div class="pt" style="left:22.500px;top:4.300px;font-size:6.600px">附件</div>
    <svg style="left:6.500px;top:12px" width="8" height="10" viewBox="0 0 8 10"><path d="M0.500 0.500 h7 v9 l-3.500 -3 l-3.500 3 z"/></svg>
    <svg style="left:6.500px;top:32.500px" width="9" height="11" viewBox="0 0 9 11"><path d="M2.200 0.500 h4 l2.200 2.200 v6.300 h-6.200 z M2.200 2 h-1.600 v8.500 h5.800 v-1.500" fill="#fff"/></svg>
    <svg style="left:22.500px;top:14px" width="66" height="9" viewBox="0 0 66 9">
      <path d="M0.500 8 v-6.500 h2.500 l0.800 1 h3 v1.200 M0.500 8 l1.200 -3.800 h5.600 l-1.200 3.800 z" stroke="#c4c4c4"/>
      <rect x="12.500" y="1" width="6.500" height="7" stroke="#c4c4c4"/><path d="M14 1 v2.500 h3.500 v-2.500" stroke="#c4c4c4"/>
      <path d="M25 7 l3.500 -4.500 a1.400 1.400 0 0 1 2.200 1.800 l-3 3.800 M28.500 7.500 l2 -0.600" stroke-width="1.600"/>
      <path d="M37 7 l3.500 -4.500 a1.400 1.400 0 0 1 2.200 1.800 l-3 3.800" stroke="#c4c4c4" stroke-width="1.600"/>
      <path d="M48 7 l3.500 -4.500 a1.400 1.400 0 0 1 2.200 1.800 l-3 3.800 M51.500 7.500 l2.500 0" stroke-width="1.600"/>
      <path d="M60 2 h4.500 v6 h-4.500 z M61.200 2 v-1 h2 v1 M61.500 4 h1.600" stroke="#c4c4c4"/>
    </svg>
    <div class="hr"></div>
    <div class="pt" style="left:21.500px;top:32.300px;font-size:6.800px">名称</div>
    <div class="vr" style="left:64px"></div>
    <div class="pt" style="left:66.500px;top:32.300px;font-size:6.800px">说明</div>
    <div class="vr" style="left:110px"></div>
    <div class="pt" style="left:112.500px;top:32.300px;font-size:6.800px">大小</div>
  </div>
</div>
</div>
<div id="pageedge2"></div>
<div id="vs">
  <div style="position:absolute;left:-0.500px;top:0;width:16px;height:8px;background:#e6e6f1;border:1px solid #b8b8c0;border-radius:1px"></div>
  <svg style="left:0;top:0;fill:none;stroke:#222;stroke-width:1.600" width="15" height="343" viewBox="0 0 15 343"><path d="M4.400 18.400 l3.400 -3.600 l3.400 3.600 M4.400 334.800 l3.400 3.600 l3.400 -3.600"/></svg>
</div>
<div id="thumb"></div>
<div id="rstrip"><svg style="left:0;top:0" width="12" height="377" viewBox="0 0 12 377"><path d="M9.200 185.200 l-5 4.500 l5 4.500 z" fill="#111"/></svg></div>

<!-- ================= STATUS ================= -->
<div id="status">
  
  <div id="pgbox"><span>1 / 1</span></div>
  <div id="zbox"><span>75%</span></div>
  <svg style="left:0;top:-519px" width="900" height="540" viewBox="0 0 900 540">
    <g stroke="#999" stroke-width="1.100">
      <path d="M17 526.800 l-4.800 4.900 l4.800 4.900 M22.200 526.800 l-4.800 4.900 l4.800 4.900"/>
      <path d="M45.600 526.800 l-6.400 4.900 l6.400 4.900"/>
      <path d="M166 526.800 l6.400 4.900 l-6.400 4.900"/>
      <path d="M189 526.800 l4.800 4.900 l-4.800 4.900 M194.200 526.800 l4.800 4.900 l-4.800 4.900"/>
    </g>
    <path d="M148 529.600 h5.600 l-2.800 3.200 z" fill="#111" stroke="none"/>
    <!-- page jump icons -->
    <g stroke="#333" stroke-width="1.200">
      <path d="M214 533.500 h-2.200 v-8.600 h4.600 M216 529.600 h9.500 v8.200 h-9.500 z M225 526.400 h-5.600 M221.200 524.600 l-1.900 1.800 l1.900 1.800"/>
    </g>
    <g stroke="#b4b4b4" stroke-width="1.200">
      <path d="M240 533.500 h-3.200 v-8.600 h9 v3 M240.500 528.600 h9.400 v8.600 h-4 M236.600 536.600 h5.800 M240.600 534.800 l1.900 1.800 l-1.900 1.800"/>
    </g>
    <!-- view mode icons -->
    <rect x="565" y="521.500" width="22" height="19" rx="3" fill="#e6e6f1" stroke="none"/>
    <g stroke="#333" stroke-width="1.400">
      <rect x="571" y="524.800" width="11" height="12.400" rx="0.800"/>
      <path d="M573.300 528.200 h6.400 M573.300 531 h6.400 M573.300 533.800 h6.400" stroke-width="1.200"/>
    </g>
    <g stroke="#b0b0b0" stroke-width="1.100">
      <rect x="594.600" y="524.800" width="12" height="6.600" rx="0.600"/><path d="M597 527.300 h7.200 M597 529.200 h7.200"/>
      <path d="M594.600 540 v-5.400 h12 v5.400 M597 537.200 h7.200"/>
      <rect x="618.400" y="524.800" width="5.800" height="12.600" rx="0.600"/><rect x="626" y="524.800" width="5.800" height="12.600" rx="0.600"/>
      <path d="M620.200 528.400 h2.200 M620.200 531 h2.200 M620.200 533.600 h2.200 M627.800 528.400 h2.200 M627.800 531 h2.200 M627.800 533.600 h2.200"/>
      <rect x="642.400" y="524.800" width="5.800" height="7" rx="0.600"/><rect x="650" y="524.800" width="5.800" height="7" rx="0.600"/>
      <path d="M642.400 540 v-5.600 h5.800 v5.600 M650 540 v-5.600 h5.800 v5.600 M644.200 527.400 h2.200 M644.200 529.400 h2.200 M651.800 527.400 h2.200 M651.800 529.400 h2.200 M644.200 537.200 h2.200 M651.800 537.200 h2.200"/>
    </g>
    <!-- zoom slider -->
    <path d="M663.200 530.800 h6.600" stroke="#333" stroke-width="1.300"/>
    <path d="M673 530.800 h100" stroke="#aaa" stroke-width="1"/>
    <circle cx="710.300" cy="530.800" r="3.900" fill="#fff" stroke="#666" stroke-width="1"/>
    <path d="M776.400 530.800 h7 M779.900 527.300 v7" stroke="#333" stroke-width="1.300"/>
    <path d="M849 530 h5 l-2.500 2.800 z" fill="#999" stroke="none"/>
    <!-- fullscreen -->
    <g stroke="#222" stroke-width="1.200">
      <path d="M866.200 528.600 v-3 h3 M866.600 526 l3.400 3.400 M878.400 528.600 v-3 h-3 M878 526 l-3.400 3.400 M866.200 534.400 v3 h3 M866.600 537 l3.400 -3.400 M878.400 534.400 v3 h-3 M878 537 l-3.400 -3.400"/>
    </g>
    <path d="M893.500 540 l6.500 -6.500 M896.500 540 l3.500 -3.500" stroke="#999" stroke-width="0.900"/>
  </svg>
</div>

</body>
</html>
